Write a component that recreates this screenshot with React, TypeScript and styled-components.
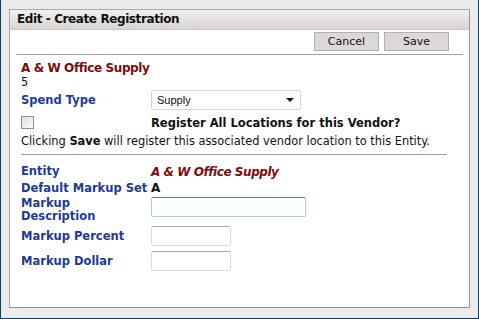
import styled, { createGlobalStyle } from 'styled-components';

const GlobalStyle = createGlobalStyle`
  html, body {
    margin: 0;
    padding: 0;
    background: #ebebeb;
  }
  body {
    font-family: 'DejaVu Sans', Verdana, sans-serif;
  }
`;

// ─── Frame ───────────────────────────────────────────────────────────────────

const Window = styled.div`
  box-sizing: border-box;
  width: 479px;
  height: 319px;
  background: #ebebeb;
  border: 1px solid #0c3c6c;
  border-top: none;
  padding: 9px 8px 10px 8px;
`;

const Panel = styled.div`
  box-sizing: border-box;
  height: 100%;
  background: #fff;
  border: 1px solid #a9a9a9;
  border-right-color: #9a9a9a;
  border-bottom-color: #909090;
  display: flex;
  flex-direction: column;
`;

const TitleBar = styled.div`
  height: 19px;
  line-height: 19px;
  padding-left: 7px;
  font-size: 12px;
  letter-spacing: -0.4px;
  font-weight: bold;
  color: #111;
  background: linear-gradient(to bottom, #f1efef, #d9d5d5);
  border-bottom: 1px solid #c9c6c6;
`;

const Body = styled.div`
  padding: 2px 20px 0 11px;
  font-size: 11.4px;
  color: #111;
`;

const Toolbar = styled.div`
  display: flex;
  justify-content: flex-end;
  gap: 5px;
  padding-bottom: 3px;
  border-bottom: 1px solid #a0a0a0;
  margin-left: -5px;
  margin-right: -14px;
  padding-right: 14px;
`;

const Button = styled.button`
  box-sizing: border-box;
  width: 65px;
  height: 19px;
  padding: 0;
  background: #dcd8d8;
  border: 1px solid #b4b0b0;
  border-radius: 0;
  font-family: 'DejaVu Sans', Verdana, sans-serif;
  font-size: 11px;
  color: #111;
`;

const Section = styled.div<{ $top: number }>`
  padding-top: ${({ $top }) => $top}px;
`;

const Vendor = styled.div`
  font-weight: bold;
  font-size: 12px;
  letter-spacing: -0.4px;
  color: #7d0a0a;
  line-height: 14px;
`;

const Plain = styled.div`
  line-height: 14px;
`;

const Row = styled.div<{ $h: number }>`
  display: flex;
  align-items: center;
  height: ${({ $h }) => $h}px;
`;

const Label = styled.div`
  width: 130px;
  flex: none;
  font-weight: bold;
  font-size: 11.5px;
  color: #1d3a96;
  line-height: 13px;
`;

const Select = styled.div`
  box-sizing: border-box;
  width: 150px;
  height: 20px;
  border: 1px solid #d6d6d6;
  border-radius: 2px;
  display: flex;
  align-items: center;
  justify-content: space-between;
  padding: 0 6px 0 5px;
  font-family: 'Liberation Sans', Arial, sans-serif;
  font-size: 11px;
`;

const Caret = styled.span`
  width: 0;
  height: 0;
  border-left: 4px solid transparent;
  border-right: 4px solid transparent;
  border-top: 4px solid #111;
`;

const CheckBox = styled.span`
  box-sizing: border-box;
  display: block;
  width: 13px;
  height: 13px;
  border: 1px solid #8f8f8f;
  background: linear-gradient(135deg, #dcdcdc, #fbfbfb);
`;

const Bold = styled.b`
  font-weight: bold;
`;

const Question = styled.div`
  font-weight: bold;
  font-size: 11.5px;
`;

const Divider = styled.hr`
  border: none;
  border-top: 1px solid #a0a0a0;
  margin: 6px 2px 0 0;
`;

const Value = styled.div<{ $italic?: boolean }>`
  font-weight: bold;
  font-size: 12px;
  letter-spacing: ${({ $italic }) => ($italic ? '-0.45px' : '0')};
  font-style: ${({ $italic }) => ($italic ? 'italic' : 'normal')};
  color: ${({ $italic }) => ($italic ? '#7d0a0a' : '#111')};
`;

const Input = styled.input<{ $w: number; $focus?: boolean; $lift?: number }>`
  box-sizing: border-box;
  width: ${({ $w }) => $w}px;
  height: 20px;
  border: 1px solid ${({ $focus }) => ($focus ? '#a9cde4' : '#dcdcdc')};
  border-top-color: ${({ $focus }) => ($focus ? '#4f7fa6' : '#a9a9a9')};
  border-radius: 2px;
  margin: 0 0 ${({ $lift }) => $lift || 0}px 0;
  outline: none;
`;

export default function App() {
  return (
    <>
      <GlobalStyle />
      <Window>
        <Panel>
          <TitleBar>Edit - Create Registration</TitleBar>
          <Body>
            <Toolbar>
              <Button>Cancel</Button>
              <Button>Save</Button>
            </Toolbar>

            <Section $top={6}>
              <Vendor>A &amp; W Office Supply</Vendor>
              <Plain>5</Plain>
              <Row $h={22}>
                <Label>Spend Type</Label>
                <Select>
                  Supply
                  <Caret />
                </Select>
              </Row>
              <Row $h={23}>
                <Label>
                  <CheckBox />
                </Label>
                <Question>Register All Locations for this Vendor?</Question>
              </Row>
              <Plain>
                Clicking <Bold>Save</Bold> will register this associated vendor location to this Entity.
              </Plain>
              <Divider />
            </Section>

            <Section $top={8}>
              <Row $h={17}>
                <Label>Entity</Label>
                <Value $italic>A &amp; W Office Supply</Value>
              </Row>
              <Row $h={16}>
                <Label>Default Markup Set</Label>
                <Value>A</Value>
              </Row>
              <Row $h={27}>
                <Label>
                  Markup
                  <br />
                  Description
                </Label>
                <Input $w={155} $focus $lift={5} />
              </Row>
              <Row $h={26}>
                <Label>Markup Percent</Label>
                <Input $w={80} />
              </Row>
              <Row $h={24}>
                <Label>Markup Dollar</Label>
                <Input $w={80} />
              </Row>
            </Section>
          </Body>
        </Panel>
      </Window>
    </>
  );
}
